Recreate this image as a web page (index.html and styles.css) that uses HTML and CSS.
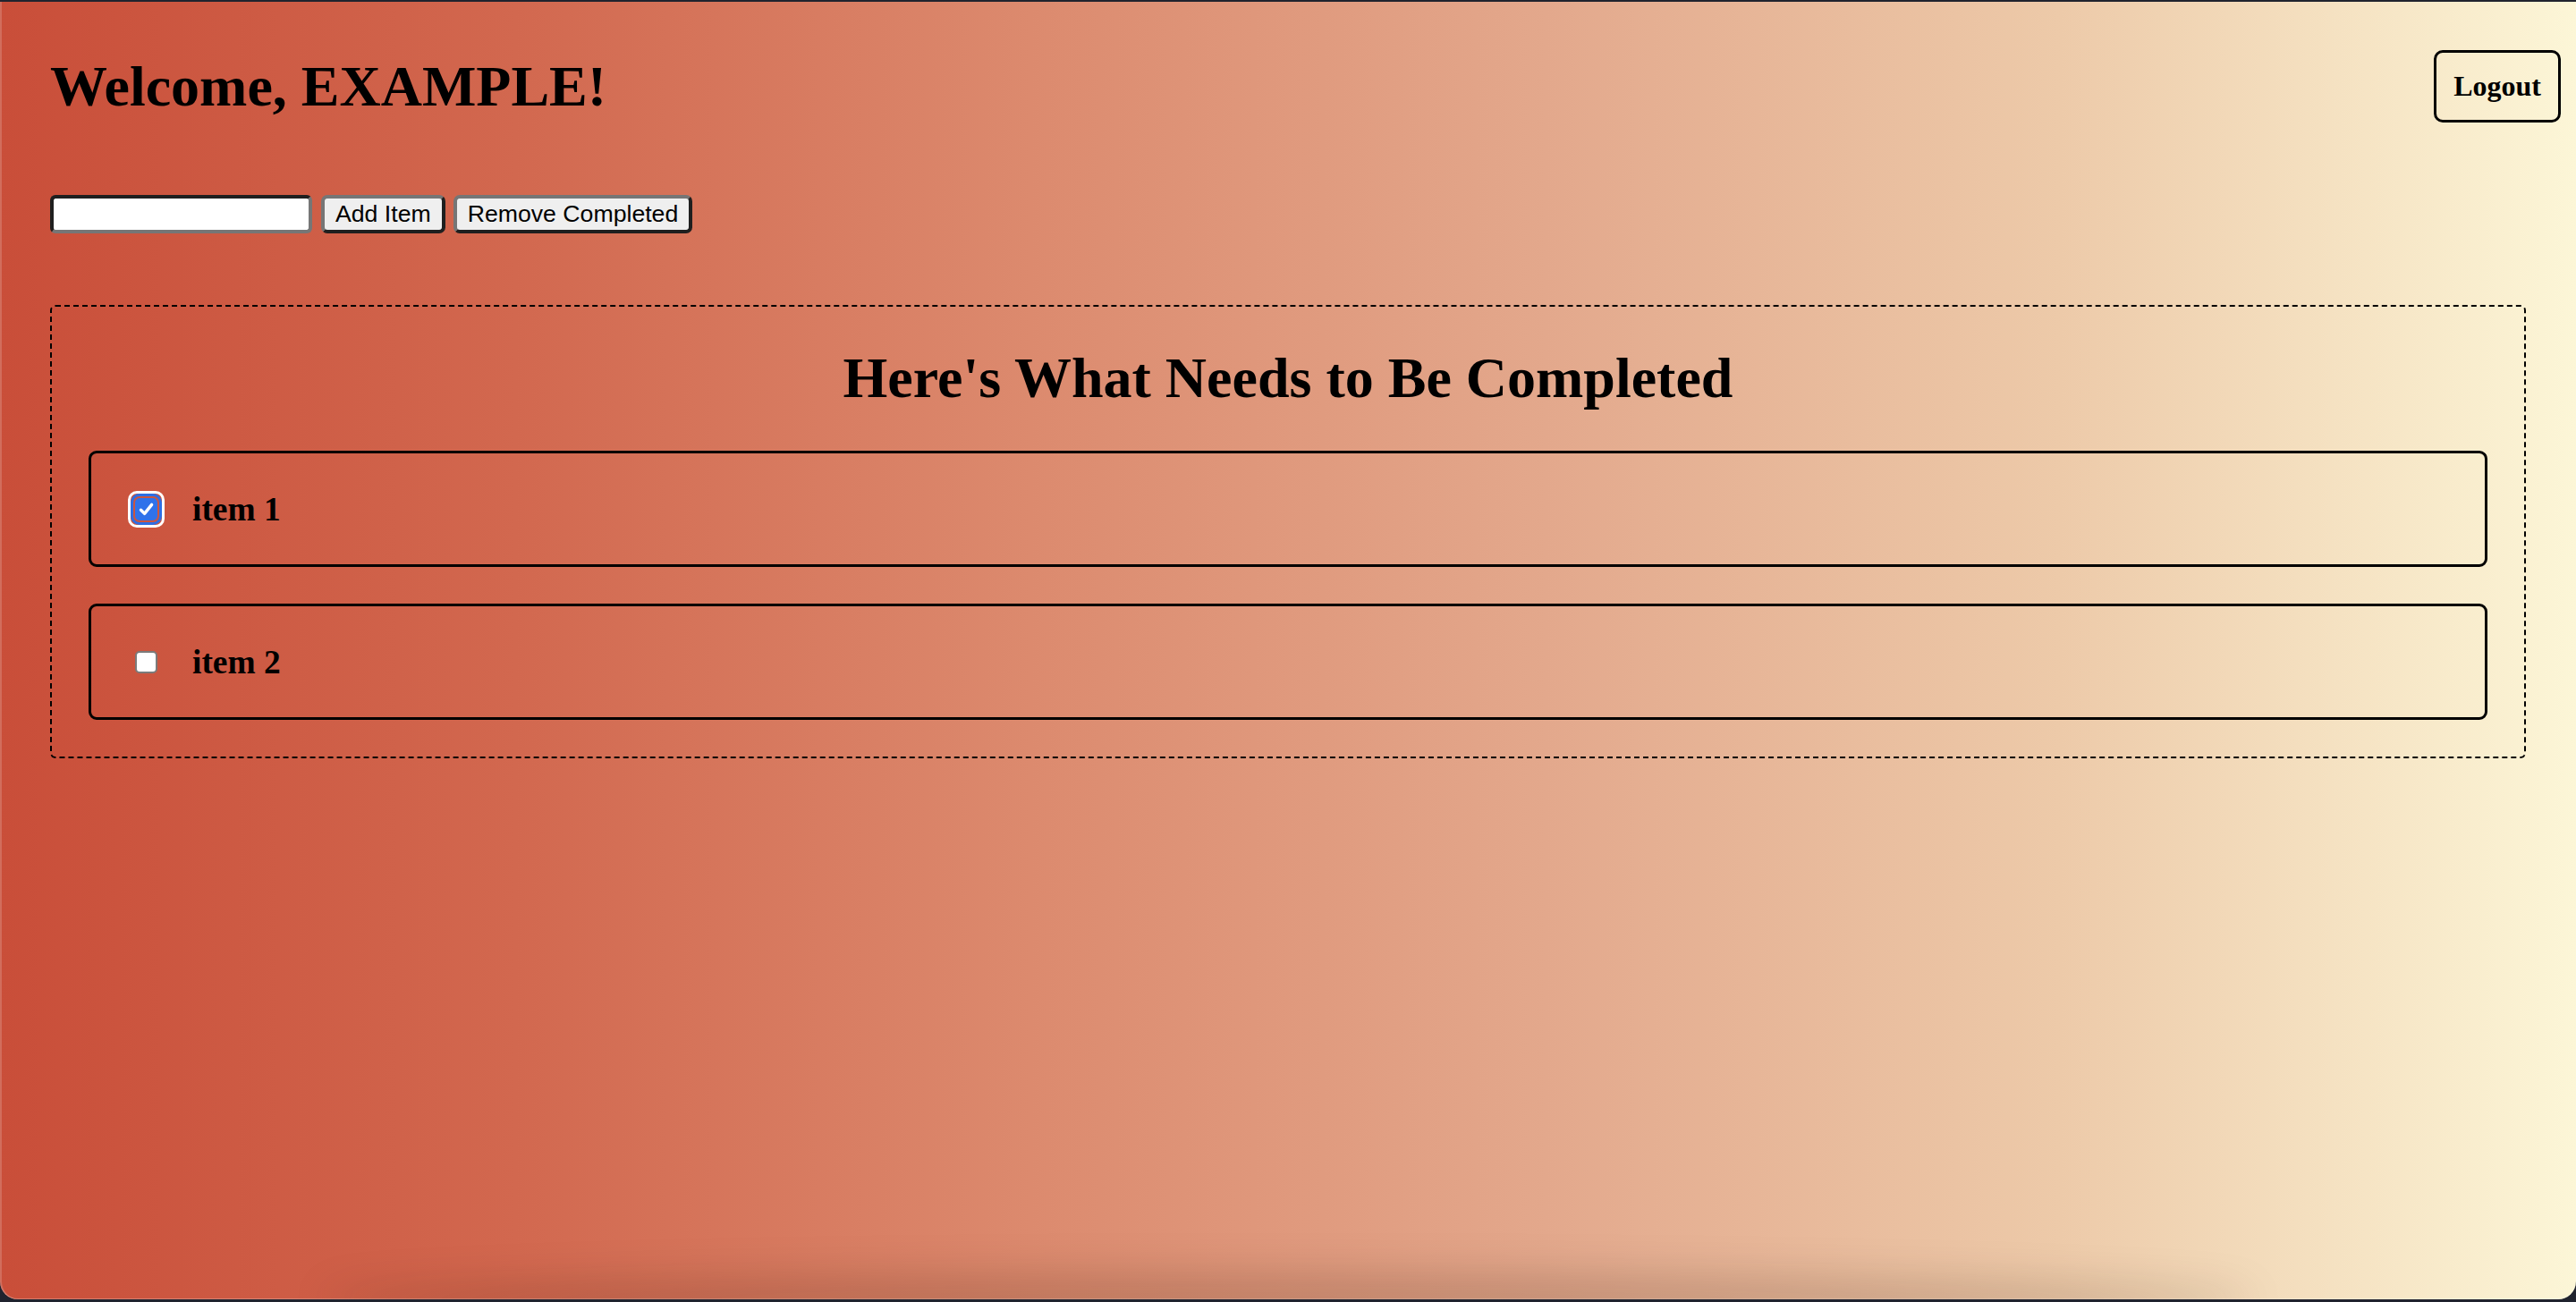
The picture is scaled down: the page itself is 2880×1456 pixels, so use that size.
FILE: index.html
```html
<!DOCTYPE html>
<html lang="en">
<head>
<meta charset="utf-8">
<title>Todo</title>
<link rel="stylesheet" href="styles.css">
</head>
<body>
<div class="window">
  <header class="header">
    <h1 class="welcome">Welcome, EXAMPLE!</h1>
    <button class="logout" type="button">Logout</button>
  </header>
  <div class="controls">
    <input class="new-item" type="text" aria-label="New item">
    <button class="btn" type="button">Add Item</button>
    <button class="btn" type="button">Remove Completed</button>
  </div>
  <section class="list">
    <h2 class="list-title">Here's What Needs to Be Completed</h2>
    <div class="item">
      <span class="check checked" role="checkbox" aria-checked="true">
        <svg viewBox="0 0 25 25" width="25" height="25"><path d="M6.5 13.2 L10.6 17.4 L18.6 7.4" fill="none" stroke="#fff" stroke-width="3.4" stroke-linecap="round" stroke-linejoin="round"/></svg>
      </span>
      <h3 class="item-text">item 1</h3>
    </div>
    <div class="item">
      <span class="check" role="checkbox" aria-checked="false"></span>
      <h3 class="item-text">item 2</h3>
    </div>
  </section>
  <div class="shade"></div>
</div>
</body>
</html>
```

FILE: styles.css
```css
html, body {
  margin: 0;
  padding: 0;
}

body {
  width: 2880px;
  height: 1456px;
  overflow: hidden;
  background: #20232e;
}

.window {
  position: relative;
  margin-top: 2px;
  height: 1451px;
  border-radius: 0 0 20px 20px;
  overflow: hidden;
  background: linear-gradient(to right, #c94e39 0%, #d2684f 20%, #dc8a6e 40%, #e3a88c 60%, #edcaa9 80%, #fcf6d7 100%);
  box-shadow: inset 2px 0 0 rgba(255, 255, 255, 0.18), inset 0 -1px 0 rgba(255, 255, 255, 0.25);
  font-family: "Liberation Serif", "Times New Roman", serif;
  color: #000;
}

.header {
  display: flex;
  justify-content: space-between;
  align-items: center;
  padding: 54px 17px 0 56px;
}

.welcome {
  margin: 0;
  font-size: 64px;
  line-height: 74px;
  font-weight: bold;
}

.logout {
  font-family: "Liberation Serif", "Times New Roman", serif;
  font-size: 32px;
  line-height: 37px;
  font-weight: bold;
  color: #000;
  background: transparent;
  border: 3px solid #000;
  border-radius: 10px;
  padding: 19px 19px;
}

.controls {
  display: flex;
  align-items: flex-start;
  margin: 81px 0 0 56px;
}

.new-item {
  box-sizing: border-box;
  width: 293px;
  height: 43px;
  margin: 0;
  padding: 2px 4px;
  background: #fff;
  border: 4px solid;
  border-color: #1f1f1f #767676 #767676 #1f1f1f;
  border-radius: 6px;
  outline: none;
}

.btn {
  box-sizing: border-box;
  height: 43px;
  margin: 0 0 0 10px;
  padding: 2px 12px;
  font-family: "Liberation Sans", Arial, sans-serif;
  font-size: 26.67px;
  line-height: 31px;
  color: #000;
  background: #efefef;
  border: 4px solid;
  border-color: #767676 #1f1f1f #1f1f1f #767676;
  border-radius: 7px;
}

.btn + .btn {
  margin-left: 9px;
}

.list {
  margin: 80px 56px 0;
  padding: 0 41px 41px;
  border: 2px dashed #000;
  border-radius: 6px;
}

.list-title {
  margin: 43px 0 44px;
  font-size: 64px;
  line-height: 74px;
  font-weight: bold;
  text-align: center;
}

.item {
  box-sizing: border-box;
  height: 130px;
  display: flex;
  align-items: center;
  padding-left: 49px;
  border: 3px solid #000;
  border-radius: 9px;
}

.item + .item {
  margin-top: 41px;
}

.check {
  position: relative;
  box-sizing: border-box;
  flex: none;
  width: 25px;
  height: 25px;
  background: #fff;
  border: 2px solid #7b7b7b;
  border-radius: 5px;
}

.check.checked {
  background: #2f72ea;
  border: none;
  outline: 3px solid #2d6ee4;
  outline-offset: 2px;
}

.check.checked::before {
  content: "";
  position: absolute;
  inset: -8px;
  border: 3px solid #fff;
  border-radius: 10px;
}

.check svg {
  display: block;
}

.item-text {
  margin: 0 0 0 39px;
  font-size: 37.44px;
  line-height: 43px;
  font-weight: bold;
}

.shade {
  position: absolute;
  left: 360px;
  right: 360px;
  bottom: -30px;
  height: 60px;
  border-radius: 50%;
  background: rgba(40, 15, 0, 0.16);
  filter: blur(22px);
  pointer-events: none;
}
```
